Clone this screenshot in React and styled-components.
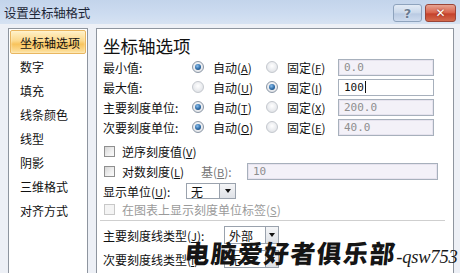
import React from "react";
import styled, { createGlobalStyle } from "styled-components";

const GlobalStyle = createGlobalStyle`
  html, body {
    margin: 0;
    padding: 0;
    background: #edf0f6;
  }
  * {
    box-sizing: border-box;
  }
`;

const CJK = `"Noto Sans CJK SC", "Noto Sans", sans-serif`;

const Dialog = styled.div`
  position: relative;
  width: 460px;
  height: 273px;
  overflow: hidden;
  display: flex;
  flex-direction: column;
  background: #edf0f6;
  font-family: ${CJK};
  color: #111;
`;

const TitleBar = styled.div`
  height: 24px;
  flex: none;
  display: flex;
  align-items: center;
  justify-content: space-between;
  padding: 0 4px 0 4px;
  background: linear-gradient(to bottom, #c3d4eb 0%, #cddcf0 60%, #d6e2f2 100%);
`;

const Title = styled.div`
  font-size: 12.5px;
  letter-spacing: -0.2px;
  color: #1d2636;
`;

const TitleButtons = styled.div`
  display: flex;
  gap: 3px;
  margin-top: 2px;
`;

const TitleButton = styled.div`
  width: ${(p) => (p.close ? "31px" : "29px")};
  height: 18px;
  border: 1px solid ${(p) => (p.close ? "#9a4538" : "#8ea3bd")};
  border-radius: 3px;
  display: flex;
  align-items: center;
  justify-content: center;
  font-family: "DejaVu Sans", sans-serif;
  font-weight: bold;
  font-size: ${(p) => (p.close ? "12px" : "13px")};
  color: ${(p) => (p.close ? "#fff" : "#6b7c92")};
  background: ${(p) =>
    p.close
      ? "linear-gradient(to bottom, #e7a493 0%, #d8614a 50%, #c4412b 55%, #d46a4d 100%)"
      : "linear-gradient(to bottom, #e3ebf6 0%, #c9d7ea 50%, #b9cae2 55%, #cedbee 100%)"};
  text-shadow: ${(p) => (p.close ? "0 0 2px #7a2010" : "0 0 2px #fff")};
`;

const Body = styled.div`
  flex: 1;
  display: flex;
  gap: 8px;
  padding: 4px 6px 0 8px;
`;

const Sidebar = styled.div`
  width: 80px;
  height: 260px;
  flex: none;
  background: #fff;
  border: 1px solid #8e959f;
  padding: 1px 0 0 0;
  display: flex;
  flex-direction: column;
`;

const NavItem = styled.div`
  height: 24px;
  margin: 0 1px;
  padding-left: 9px;
  display: flex;
  align-items: center;
  font-size: 12px;
  color: #111;
  border: 1px solid ${(p) => (p.active ? "#e9b660" : "transparent")};
  border-radius: 2px;
  background: ${(p) =>
    p.active
      ? "linear-gradient(to bottom, #fff1c8 0%, #fcd98c 45%, #f8c35c 60%, #fde3a4 100%)"
      : "transparent"};
  box-shadow: ${(p) => (p.active ? "inset 0 0 2px #fff6dc" : "none")};
`;

const Panel = styled.div`
  flex: 1;
  height: 260px;
  background: #fff;
  border: 1px solid #8e959f;
  padding: 6px 0 0 6px;
  display: flex;
  flex-direction: column;
`;

const Heading = styled.div`
  font-size: 17.5px;
  line-height: 22px;
  color: #111;
`;

const Options = styled.div`
  display: grid;
  grid-template-columns: 89px 74px 72px 96px;
  grid-auto-rows: 20px;
  align-items: center;
  font-size: 12px;
`;

const Label = styled.span`
  font-size: 12px;
  white-space: nowrap;
  color: ${(p) => (p.disabled ? "#9a9a9a" : "#111")};
`;

const RadioWrap = styled.div`
  display: flex;
  align-items: center;
  gap: 9px;
`;

const RadioDot = styled.span`
  width: 12px;
  height: 12px;
  border-radius: 50%;
  flex: none;
  border: 1px solid ${(p) => (p.checked ? "#8b97a6" : "#c4c8ce")};
  background: radial-gradient(circle at 50% 40%, #ffffff 0%, #e4e6ea 70%, #d3d6db 100%);
  display: flex;
  align-items: center;
  justify-content: center;

  &::after {
    content: "";
    display: ${(p) => (p.checked ? "block" : "none")};
    width: 6px;
    height: 6px;
    border-radius: 50%;
    background: radial-gradient(circle at 40% 35%, #8cc0ee 0%, #2d6aa5 55%, #163e6a 100%);
  }
`;

const Field = styled.div`
  height: 17px;
  width: ${(p) => p.width || "96px"};
  border: 1px solid #a7b0bc;
  box-shadow: inset 0 0 0 1px ${(p) => (p.active ? "#ffffff" : "#e6e3ee")};
  background: ${(p) => (p.active ? "#fff" : "#f3f1f8")};
  padding-left: 5px;
  display: flex;
  align-items: center;
  font-family: "DejaVu Sans Mono", "Liberation Mono", monospace;
  font-size: 11px;
  color: ${(p) => (p.active ? "#111" : "#8e8e8e")};
`;

const Caret = styled.span`
  width: 1px;
  height: 12px;
  margin-left: 1px;
  background: #111;
`;

const Mn = styled.span`
  font-size: 11px;
  text-decoration: underline;
`;

const CheckRow = styled.div`
  height: ${(p) => p.h || "20px"};
  display: flex;
  align-items: center;
  gap: 7px;
  padding-left: 1px;
  margin-top: ${(p) => p.mt || "0"};
`;

const CheckBox = styled.span`
  width: 11px;
  height: 11px;
  flex: none;
  border: 1px solid ${(p) => (p.disabled ? "#c8c8c8" : "#8f8f8f")};
  background: ${(p) =>
    p.disabled
      ? "#f4f4f4"
      : "linear-gradient(135deg, #d6d6d6 0%, #f0f0f0 60%, #fafafa 100%)"};
`;

const GridRow = styled.div`
  height: 20px;
  display: grid;
  grid-template-columns: ${(p) => p.cols};
  align-items: center;
  margin-top: ${(p) => p.mt || "0"};
`;

const BaseLabel = styled.span`
  font-size: 12px;
  color: #777;
`;

const Select = styled.div`
  width: ${(p) => p.width};
  height: ${(p) => p.h || "17px"};
  border: 1px solid #9aa2ad;
  background: #fff;
  display: flex;
  align-items: stretch;
  font-size: 12px;
`;

const SelectValue = styled.span`
  flex: 1;
  padding-left: 4px;
  display: flex;
  align-items: center;
`;

const SelectArrow = styled.span`
  width: ${(p) => p.w || "16px"};
  border-left: 1px solid #9aa2ad;
  background: linear-gradient(to bottom, #f4f5f7 0%, #dfe2e7 100%);
  display: flex;
  align-items: center;
  justify-content: center;

  &::after {
    content: "";
    border-left: 3.5px solid transparent;
    border-right: 3.5px solid transparent;
    border-top: 4px solid #111;
  }
`;

const Separator = styled.div`
  height: 1px;
  flex: none;
  background: #cfcfcf;
  margin: 3px 8px 4px -3px;
`;

const Watermark = styled.div`
  position: absolute;
  left: 185px;
  top: 234px;
  display: flex;
  align-items: baseline;
  white-space: nowrap;
  pointer-events: none;
`;

const WatermarkCJK = styled.span`
  font-family: ${CJK};
  font-weight: 900;
  font-size: 25px;
  letter-spacing: 1.4px;
  color: #151515;
  transform: skewX(-6deg);
  display: inline-block;
`;

const WatermarkLatin = styled.span`
  font-family: "Liberation Serif", serif;
  font-style: italic;
  font-size: 18.5px;
  letter-spacing: -0.2px;
  color: #1a1a1a;
`;

const navItems = [
  "坐标轴选项",
  "数字",
  "填充",
  "线条颜色",
  "线型",
  "阴影",
  "三维格式",
  "对齐方式",
];

const rows = [
  { label: "最小值:", auto: true, a: "A", f: "F", value: "0.0" },
  { label: "最大值:", auto: false, a: "U", f: "I", value: "100" },
  { label: "主要刻度单位:", auto: true, a: "T", f: "X", value: "200.0" },
  { label: "次要刻度单位:", auto: true, a: "O", f: "E", value: "40.0" },
];

const Radio = ({ checked, text, mn }) => (
  <RadioWrap>
    <RadioDot checked={checked} />
    <Label>
      {text}(<Mn>{mn}</Mn>)
    </Label>
  </RadioWrap>
);

export default function App() {
  return (
    <>
      <GlobalStyle />
      <Dialog>
        <TitleBar>
          <Title>设置坐标轴格式</Title>
          <TitleButtons>
            <TitleButton>?</TitleButton>
            <TitleButton close>✕</TitleButton>
          </TitleButtons>
        </TitleBar>
        <Body>
          <Sidebar>
            {navItems.map((item, i) => (
              <NavItem key={item} active={i === 0}>
                {item}
              </NavItem>
            ))}
          </Sidebar>
          <Panel>
            <Heading>坐标轴选项</Heading>
            <Options>
              {rows.map((r) => (
                <React.Fragment key={r.label}>
                  <Label>{r.label}</Label>
                  <Radio checked={r.auto} text="自动" mn={r.a} />
                  <Radio checked={!r.auto} text="固定" mn={r.f} />
                  <Field active={!r.auto}>
                    {r.value}
                    {!r.auto && <Caret />}
                  </Field>
                </React.Fragment>
              ))}
            </Options>
            <CheckRow mt="4px">
              <CheckBox />
              <Label>
                逆序刻度值(<Mn>V</Mn>)
              </Label>
            </CheckRow>
            <GridRow cols="98px 46px 191px">
              <CheckRow>
                <CheckBox />
                <Label>
                  对数刻度(<Mn>L</Mn>)
                </Label>
              </CheckRow>
              <BaseLabel>
                基(<Mn>B</Mn>):
              </BaseLabel>
              <Field width="191px">10</Field>
            </GridRow>
            <GridRow cols="83px 50px">
              <Label>
                显示单位(<Mn>U</Mn>):
              </Label>
              <Select width="50px" h="16px">
                <SelectValue>无</SelectValue>
                <SelectArrow />
              </Select>
            </GridRow>
            <CheckRow h="16px">
              <CheckBox disabled />
              <Label disabled>
                在图表上显示刻度单位标签(<Mn>S</Mn>)
              </Label>
            </CheckRow>
            <Separator />
            <GridRow cols="121px 55px">
              <Label>
                主要刻度线类型(<Mn>J</Mn>):
              </Label>
              <Select width="55px" h="18px">
                <SelectValue>外部</SelectValue>
                <SelectArrow w="13px" />
              </Select>
            </GridRow>
            <GridRow cols="121px 55px" mt="4px">
              <Label>
                次要刻度线类型(<Mn>I</Mn>):
              </Label>
              <Select width="55px" h="18px">
                <SelectValue>无</SelectValue>
                <SelectArrow w="13px" />
              </Select>
            </GridRow>
          </Panel>
        </Body>
        <Watermark>
          <WatermarkCJK>电脑爱好者俱乐部</WatermarkCJK>
          <WatermarkLatin>-qsw753</WatermarkLatin>
        </Watermark>
      </Dialog>
    </>
  );
}
